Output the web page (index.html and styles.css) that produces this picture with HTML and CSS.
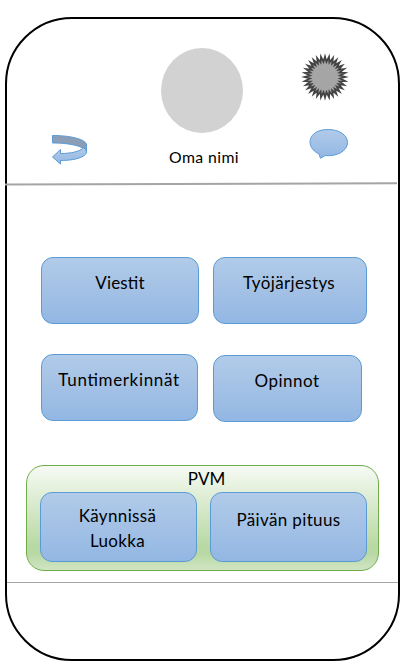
FILE: index.html
```
<!DOCTYPE html>
<html lang="fi">
<head>
<meta charset="utf-8">
<title>Oma nimi</title>
<link rel="stylesheet" href="styles.css">
</head>
<body>
<main class="phone">
  <header class="header">
    <svg class="back" width="38" height="34" viewBox="0 0 38 34">
      <defs>
        <linearGradient id="blue" x1="0" y1="0" x2="0" y2="1"><stop offset="0" stop-color="#b1cbe9"/><stop offset="1" stop-color="#92b7e3"/></linearGradient>
      </defs>
      <path d="M1.500 3.500C20 3.500 35.500 7.500 35.500 13V20.500C34.500 14.500 20 11 1.500 11Z" fill="#8b9eb8" stroke="#5b9bd5"/>
      <path d="M35.500 20C35 25 24 28.500 9.500 28.500V32L1.500 25L9.500 17.500V21.500C20 21.500 29 19.500 32.500 15.800C34.500 17 35.500 18.500 35.500 20Z" fill="url(#blue)" stroke="#5b9bd5"/>
    </svg>
    <div class="profile">
      <div class="avatar"></div>
      <div class="name">Oma nimi</div>
    </div>
    <div class="tools">
      <svg width="50" height="50" viewBox="-25 -25 50 50"><polygon id="gear" class="gear"/></svg>
      <svg class="bubble" width="42" height="34" viewBox="0 0 42 34">
        <path d="M12.500 31.300L10.900 26.800C-3 21 -1 2.500 20 2.500C31 2.500 39.500 8 39.500 15.500C39.500 24 29 29.700 17 28.600Z" fill="url(#blue)" stroke="#5b9bd5"/>
      </svg>
    </div>
  </header>
  <svg class="divider" width="393" height="4" viewBox="0 0 393 4"><path d="M0 2.500L392 1.200" stroke="#a5a5a5" stroke-width="2"/></svg>
  <nav class="menu">
    <div class="row">
      <a class="tile messages">Viestit</a>
      <a class="tile schedule">Työjärjestys</a>
    </div>
    <div class="row">
      <a class="tile marks">Tuntimerkinnät</a>
      <a class="tile studies">Opinnot</a>
    </div>
  </nav>
  <section class="day">
    <div class="title">PVM</div>
    <div class="cards">
      <div class="tile now">Käynnissä<br>Luokka</div>
      <div class="tile length">Päivän pituus</div>
    </div>
  </section>
  <footer class="footer"></footer>
</main>
<script src="gear.js"></script>
</body>
</html>
```
FILE: styles.css
```
* { box-sizing: border-box; }
body { margin: 0; background: #fff; color: #000; font-family: Lato, "Liberation Sans", sans-serif; font-feature-settings: "liga" 1; overflow: hidden; }
svg { display: block; }
.phone { width: 395px; height: 644px; margin: 17px 0 0 5px; border: 2px solid #000; border-radius: 67px; }
.header { height: 163px; display: grid; grid-template-columns: 144px 106px 1fr; }
.back { margin: 113px 0 0 44px; }
.profile { padding-top: 29px; display: flex; flex-direction: column; align-items: center; }
.avatar { width: 82px; height: 85px; margin-right: 4px; border-radius: 50%; background: #d2d2d2; }
.name { margin-top: 14px; font-size: 15.8px; line-height: 20px; letter-spacing: 0.4px; white-space: nowrap; }
.tools { padding: 33px 0 0 43px; }
.gear { fill: #a5a5a5; stroke: #434343; stroke-width: 1.8; stroke-miterlimit: 12; }
.bubble { margin: 25px 0 0 8px; }
.divider { margin-left: -2px; }
.menu { margin: 71px 0 0 34px; display: flex; flex-direction: column; gap: 30px; }
.row { display: flex; }
.tile { height: 67px; border: 1px solid #5b9bd5; border-radius: 12px; background: linear-gradient(#b1cbe9, #a3c1e5 50%, #92b7e3); text-align: center; font-size: 17px; letter-spacing: 0.35px; line-height: 25px; padding-top: 12px; white-space: nowrap; }
.messages { width: 158px; margin-right: 14px; letter-spacing: 0.15px; }
.schedule { width: 154px; padding-right: 2px; }
.marks { width: 157px; margin-right: 15px; padding-right: 1px; letter-spacing: 0.65px; }
.studies { width: 149px; margin-top: 1px; padding-right: 1px; letter-spacing: 0.5px; }
.day { width: 353px; height: 106px; margin: 43px 0 0 19px; border: 1px solid #70ad47; border-radius: 18px; background: linear-gradient(#f6faf4, #b9d9a4 76%, #b9d9a4 84%, #d0e5c3); }
.title { height: 26px; padding-left: 8px; text-align: center; font-size: 17px; line-height: 25px; }
.cards { display: flex; gap: 13px; padding-left: 13px; }
.now { width: 157px; height: 70px; padding-top: 10px; padding-right: 2px; }
.length { width: 157px; height: 70px; padding-top: 14px; }
.footer { margin-top: 11px; border-top: 1px solid #a5a5a5; }
```
FILE: gear.js
```
const points = [];
for (let i = 0; i < 64; i++) {
  const angle = i * Math.PI / 32;
  const radius = i % 2 ? 15.2 : 20.5;
  points.push((Math.cos(angle) * radius).toFixed(2) + "," + (Math.sin(angle) * radius).toFixed(2));
}
document.getElementById("gear").setAttribute("points", points.join(" "));
```
